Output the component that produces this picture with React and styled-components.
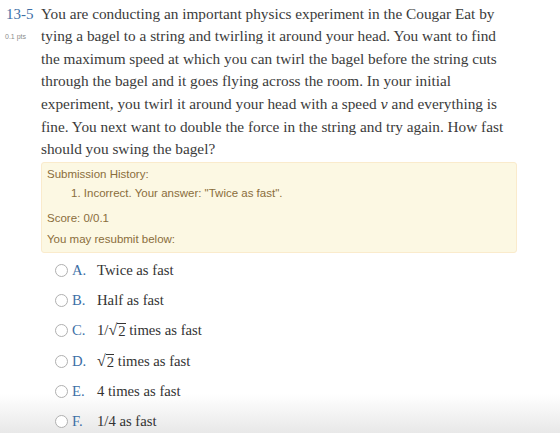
import React from "react";
import styled, { createGlobalStyle } from "styled-components";

const Global = createGlobalStyle`
  html, body { margin: 0; padding: 0; }
  html {
    min-height: 433px;
    background: linear-gradient(to bottom, #ffffff 0px, #ffffff 394px, #e8e8e8 433px);
  }
  body { background: transparent; }
`;

const Question = styled.div`
  display: grid;
  grid-template-columns: 41px 476px;
  padding-top: 3px;
`;

const Meta = styled.div`
  display: flex;
  flex-direction: column;
  padding-left: 6px;
`;

const Num = styled.div`
  font-family: "Liberation Serif", serif;
  font-size: 15px;
  line-height: 22.5px;
  color: #3d6fa6;
`;

const Pts = styled.div`
  font-family: "Liberation Sans", sans-serif;
  font-size: 7px;
  line-height: 22.5px;
  color: #8c8c8c;
  margin-left: -1px;
`;

const Body = styled.div`
  display: flex;
  flex-direction: column;
`;

const Text = styled.p`
  margin: 0;
  font-family: "Liberation Serif", serif;
  font-size: 15.3px;
  line-height: 22.4px;
  color: #3b3b3b;
  width: 476px;
`;

const Var = styled.i`
  font-style: italic;
  font-family: "DejaVu Serif", serif;
  font-size: 13px;
`;

const Alert = styled.div`
  margin-top: 1px;
  background: #fcf8e3;
  border: 1px solid #faebcc;
  border-radius: 3px;
  padding: 2px 5px 3px 5px;
  font-family: "Liberation Sans", sans-serif;
  font-size: 11.5px;
  color: #8a6d3b;
  display: flex;
  flex-direction: column;
  box-sizing: border-box;
  height: 91px;
`;

const AlertLine = styled.div`
  line-height: 19px;
  padding-left: ${(p) => (p.$indent ? "24px" : "0")};
  margin-top: ${(p) => p.$gap || 0}px;
`;

const Options = styled.div`
  display: flex;
  flex-direction: column;
  padding-left: 14px;
  padding-top: 2px;
`;

const Option = styled.label`
  display: flex;
  align-items: center;
  height: 30.4px;
  font-family: "Liberation Serif", serif;
  font-size: 14.7px;
  color: #333;
`;

const Radio = styled.span`
  width: 11px;
  height: 11px;
  border: 1px solid #b0b0b0;
  border-radius: 50%;
  background: #fff;
  box-sizing: content-box;
  flex: none;
`;

const Letter = styled.span`
  color: #3d6fa6;
  width: 25px;
  margin-left: 4px;
`;

const Sqrt = styled.span`
  display: inline-flex;
  align-items: flex-end;
`;

const Root = styled.span`
  font-size: 16px;
  line-height: 16px;
`;

const Radicand = styled.span`
  border-top: 1px solid #333;
  line-height: 14px;
  padding-left: 1px;
`;

const SqrtSign = ({ children }) => (
  <Sqrt>
    <Root>√</Root>
    <Radicand>{children}</Radicand>
  </Sqrt>
);

const options = [
  ["A.", "Twice as fast"],
  ["B.", "Half as fast"],
  ["C.", <>1/<SqrtSign>2</SqrtSign> times as fast</>],
  ["D.", <><SqrtSign>2</SqrtSign> times as fast</>],
  ["E.", "4 times as fast"],
  ["F.", "1/4 as fast"],
];

export default function App() {
  return (
    <>
      <Global />
      <Question>
        <Meta>
          <Num>13-5</Num>
          <Pts>0.1 pts</Pts>
        </Meta>
        <Body>
          <Text>
            You are conducting an important physics experiment in the Cougar Eat by
            tying a bagel to a string and twirling it around your head. You want to find
            the maximum speed at which you can twirl the bagel before the string cuts
            through the bagel and it goes flying across the room. In your initial
            experiment, you twirl it around your head with a speed <Var>v</Var> and everything is
            fine. You next want to double the force in the string and try again. How fast
            should you swing the bagel?
          </Text>
          <Alert>
            <AlertLine>Submission History:</AlertLine>
            <AlertLine $indent>1. Incorrect. Your answer: "Twice as fast".</AlertLine>
            <AlertLine $gap={6}>Score: 0/0.1</AlertLine>
            <AlertLine $gap={2}>You may resubmit below:</AlertLine>
          </Alert>
          <Options>
            {options.map(([l, t]) => (
              <Option key={l}>
                <Radio />
                <Letter>{l}</Letter>
                <span>{t}</span>
              </Option>
            ))}
          </Options>
        </Body>
      </Question>
    </>
  );
}
